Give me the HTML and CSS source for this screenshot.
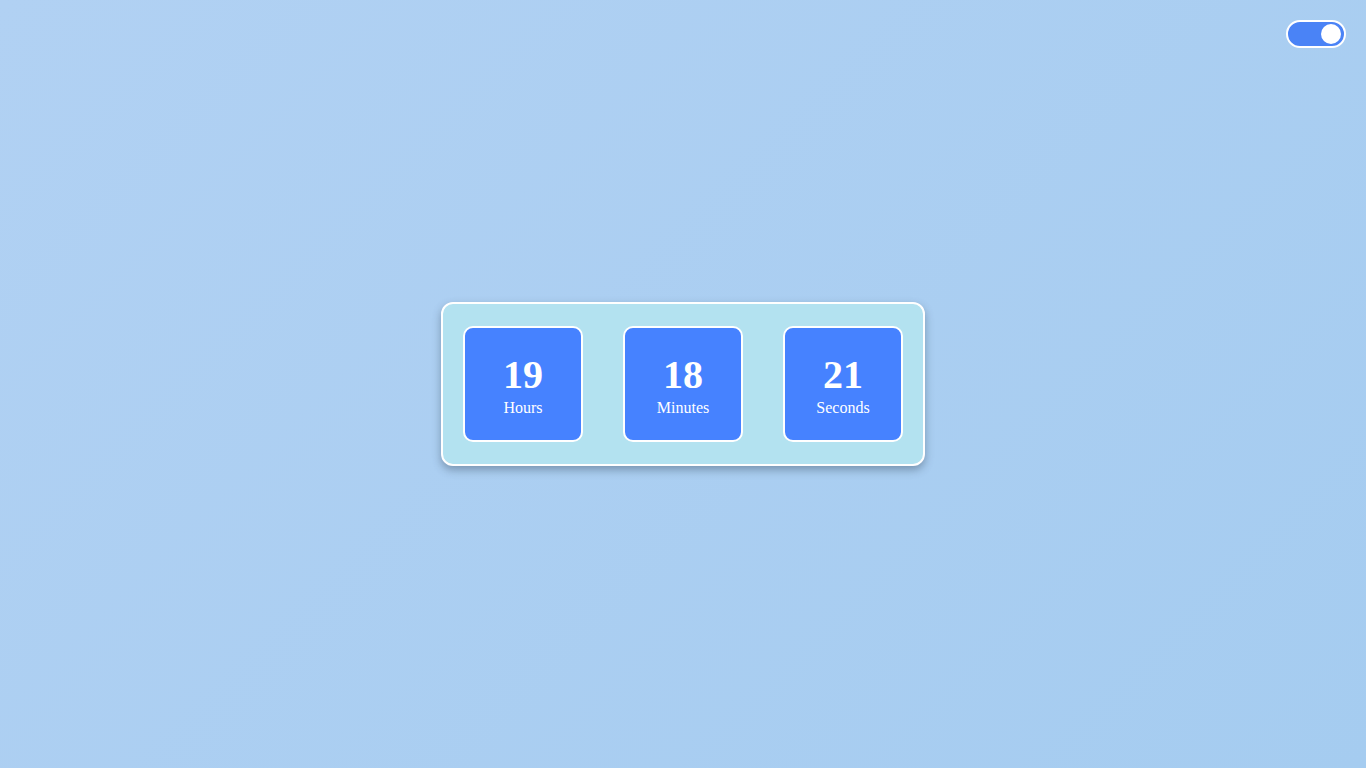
FILE: index.html
```html
<!DOCTYPE html>
<html>
<head>
<meta charset="utf-8">
<link rel="stylesheet" href="styles.css">
</head>
<body>
<div class="page">
  <div class="toggle"><span class="knob"></span></div>
  <div class="timer">
    <div class="unit"><div class="num">19</div><div class="label">Hours</div></div>
    <div class="unit"><div class="num">18</div><div class="label">Minutes</div></div>
    <div class="unit"><div class="num">21</div><div class="label">Seconds</div></div>
  </div>
</div>
</body>
</html>
```
FILE: styles.css
```css
html, body {
  margin: 0;
  height: 100%;
}
body {
  background: linear-gradient(135deg, #b1d1f3 0%, #a5ccf0 100%);
  font-family: "Liberation Serif", "Times New Roman", serif;
}
.page {
  position: relative;
  height: 768px;
  display: flex;
  align-items: center;
  justify-content: center;
}
.toggle {
  position: absolute;
  top: 20px;
  right: 20px;
  height: 24px;
  width: 50px;
  border: 2px solid #fff;
  border-radius: 16px;
  background: #4a83f6;
  display: flex;
  align-items: center;
  justify-content: flex-end;
  padding: 0 3px;
}
.knob {
  width: 20px;
  height: 20px;
  border-radius: 50%;
  background: #fff;
}
.timer {
  display: flex;
  gap: 40px;
  padding: 22px 20px;
  border: 2px solid #fff;
  border-radius: 12px;
  background: #b3e2f0;
  box-shadow: 0 4px 8px rgba(60, 80, 100, 0.45);
}
.unit {
  width: 116px;
  height: 108px;
  padding-top: 4px;
  border: 2px solid #fff;
  border-radius: 10px;
  background: #4682ff;
  color: #fff;
  display: flex;
  flex-direction: column;
  align-items: center;
  justify-content: center;
}
.num {
  font-size: 40px;
  font-weight: bold;
  line-height: 40px;
}
.label {
  font-size: 16px;
  line-height: 18px;
  margin-top: 4px;
}
```
